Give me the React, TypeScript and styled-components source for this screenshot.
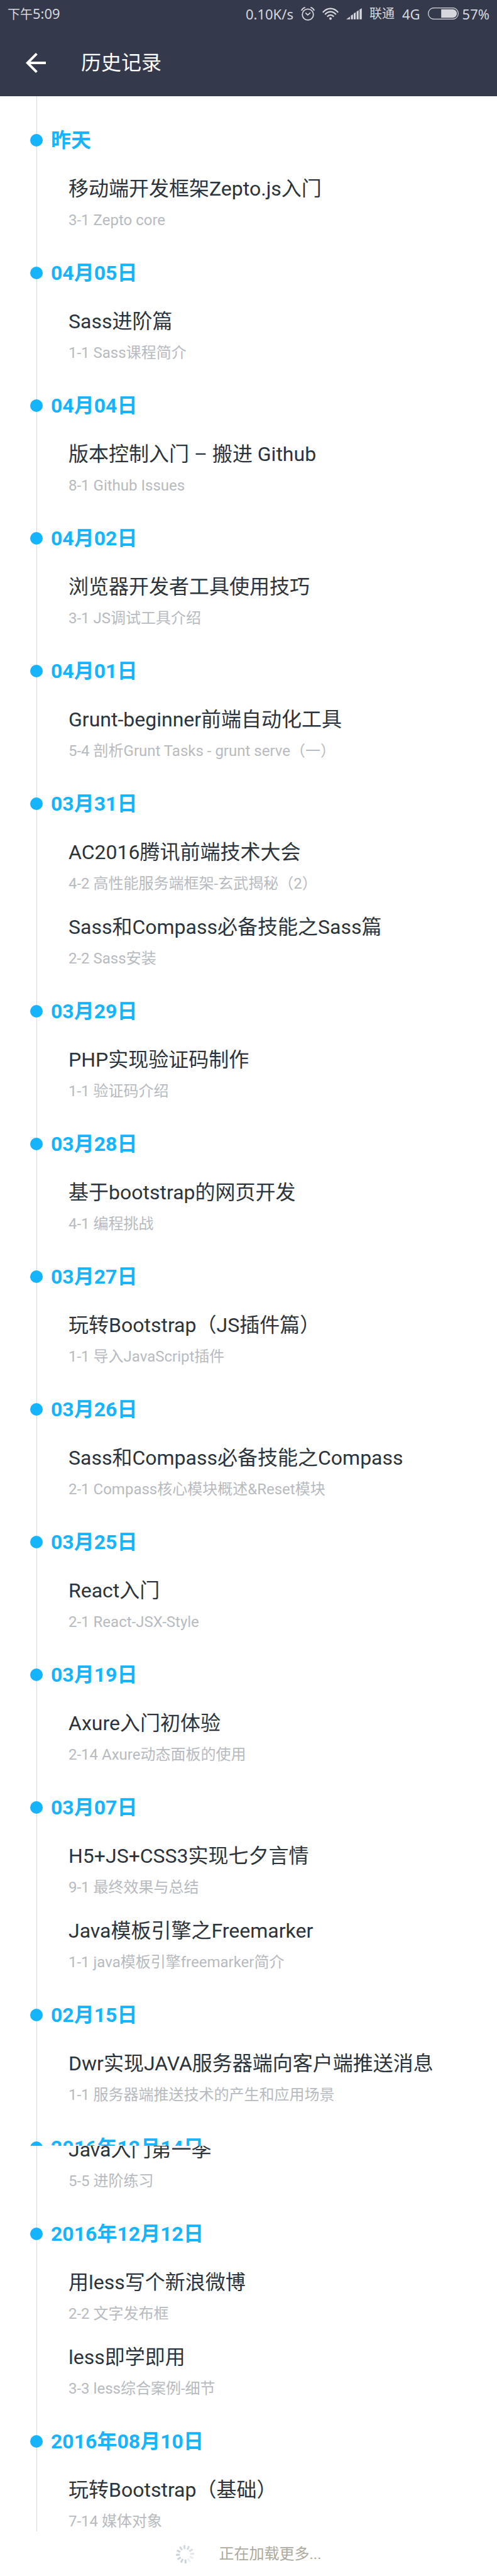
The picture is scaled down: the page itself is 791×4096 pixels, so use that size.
import React from 'react';
import styled, { createGlobalStyle } from 'styled-components';

const color = {
  header: '#35394c',
  status: '#d6d7dc',
  accent: '#14b4ff',
  title: '#2b343c',
  caption: '#b7bbc0',
  rule: '#d9dbde',
  loading: '#adaa9e',
};

const GlobalStyle = createGlobalStyle`
  * { box-sizing: border-box; }
  body {
    margin: 0;
    background: #fff;
    font-family: Roboto, "Noto Sans CJK SC", sans-serif;
  }
`;

const Header = styled.header`
  background: ${color.header};
`;

const StatusBar = styled.div`
  display: flex;
  align-items: center;
  justify-content: space-between;
  height: 47px;
  padding: 0 12px 4px;
  color: ${color.status};
  font-family: "Noto Sans", "Noto Sans CJK SC", sans-serif;
  font-size: 22px;
  line-height: 32px;
  white-space: nowrap;
`;

const Hanzi = styled.span`
  font-size: 20px;
`;

const StatusIcons = styled.div`
  display: flex;
  align-items: center;
  gap: 12px;
`;

const BatteryGroup = styled.span`
  display: flex;
  align-items: center;
  gap: 6px;
`;

const Icon = styled.svg`
  display: block;
  flex: none;
`;

const AppBar = styled.div`
  display: flex;
  align-items: center;
  gap: 48px;
  height: 106px;
  padding: 0 33px;
  color: #fff;
`;

const BackButton = styled.button`
  display: block;
  width: 48px;
  height: 48px;
  padding: 0;
  border: 0;
  background: none;
  color: inherit;
  cursor: pointer;
`;

const PageTitle = styled.h1`
  margin: 0;
  font-size: 32px;
  font-weight: 400;
  line-height: 44px;
`;

const Timeline = styled.main`
  margin-left: 58px;
  padding-top: 48px;
  border-left: 1px solid ${color.rule};
`;

const Day = styled.section`
  padding-bottom: 15px;

  &:last-child {
    padding-bottom: 0;
  }
`;

const DayHeading = styled.h2<{ $cut?: boolean }>`
  display: flex;
  align-items: flex-start;
  gap: 13px;
  height: ${(p) => (p.$cut ? '19px' : '44px')};
  margin: 0 0 ${(p) => (p.$cut ? '0' : '33px')} -11px;
  overflow: hidden;
  color: ${color.accent};
  font-size: 32px;
  font-weight: 700;
  line-height: 45px;
`;

const Dot = styled.span`
  flex: none;
  width: 20px;
  height: 20px;
  margin-top: 12px;
  border-radius: 50%;
  background: ${color.accent};
`;

const Lessons = styled.ul<{ $cut?: boolean }>`
  margin: 0;
  padding: 0;
  list-style: none;
  overflow: hidden;

  & > li:first-child {
    margin-top: ${(p) => (p.$cut ? '-16px' : '0')};
  }
`;

const Lesson = styled.li`
  padding: 0 24px 31px 50px;

  ${Day}:last-child &:last-child {
    padding-bottom: 0;
  }
`;

const LessonLink = styled.a`
  display: flex;
  flex-direction: column;
  gap: 12px;
  color: ${color.title};
  text-decoration: none;
`;

const Course = styled.span`
  font-size: 32px;
  line-height: 44px;
`;

const Chapter = styled.span`
  color: ${color.caption};
  font-size: 24px;
  line-height: 32px;
`;

const Loading = styled.footer`
  display: flex;
  align-items: center;
  justify-content: center;
  gap: 40px;
  padding: 20px 0 19px;
  color: ${color.loading};
  font-size: 24px;
  line-height: 32px;
`;

type DayRecord = {
  date: string;
  cut?: boolean;
  lessons: [course: string, chapter: string][];
};

const history: DayRecord[] = [
  { date: '昨天', lessons: [['移动端开发框架Zepto.js入门', '3-1 Zepto core']] },
  { date: '04月05日', lessons: [['Sass进阶篇', '1-1 Sass课程简介']] },
  { date: '04月04日', lessons: [['版本控制入门 – 搬进 Github', '8-1 Github Issues']] },
  { date: '04月02日', lessons: [['浏览器开发者工具使用技巧', '3-1 JS调试工具介绍']] },
  { date: '04月01日', lessons: [['Grunt-beginner前端自动化工具', '5-4 剖析Grunt Tasks - grunt serve（一）']] },
  {
    date: '03月31日',
    lessons: [
      ['AC2016腾讯前端技术大会', '4-2 高性能服务端框架-玄武揭秘（2）'],
      ['Sass和Compass必备技能之Sass篇', '2-2 Sass安装'],
    ],
  },
  { date: '03月29日', lessons: [['PHP实现验证码制作', '1-1 验证码介绍']] },
  { date: '03月28日', lessons: [['基于bootstrap的网页开发', '4-1 编程挑战']] },
  { date: '03月27日', lessons: [['玩转Bootstrap（JS插件篇）', '1-1 导入JavaScript插件']] },
  { date: '03月26日', lessons: [['Sass和Compass必备技能之Compass', '2-1 Compass核心模块概述&Reset模块']] },
  { date: '03月25日', lessons: [['React入门', '2-1 React-JSX-Style']] },
  { date: '03月19日', lessons: [['Axure入门初体验', '2-14 Axure动态面板的使用']] },
  {
    date: '03月07日',
    lessons: [
      ['H5+JS+CSS3实现七夕言情', '9-1 最终效果与总结'],
      ['Java模板引擎之Freemarker', '1-1 java模板引擎freemarker简介'],
    ],
  },
  { date: '02月15日', lessons: [['Dwr实现JAVA服务器端向客户端推送消息', '1-1 服务器端推送技术的产生和应用场景']] },
  { date: '2016年12月14日', cut: true, lessons: [['Java入门第一季', '5-5 进阶练习']] },
  {
    date: '2016年12月12日',
    lessons: [
      ['用less写个新浪微博', '2-2 文字发布框'],
      ['less即学即用', '3-3 less综合案例-细节'],
    ],
  },
  { date: '2016年08月10日', lessons: [['玩转Bootstrap（基础）', '7-14 媒体对象']] },
];

const AlarmIcon = () => (
  <Icon width="22" height="22" viewBox="0 0 86 87" fill="none" stroke="currentColor" aria-hidden="true">
    <circle cx="43" cy="48" r="35" strokeWidth="7" />
    <path d="M28 37l14 14 17-15" strokeWidth="7" />
    <path d="M3 23C7 13 15 6 26 3M83 23C79 13 71 6 60 3" strokeWidth="7" />
  </Icon>
);

const WifiIcon = () => (
  <Icon width="26" height="20" viewBox="0 0 104 78" fill="none" stroke="currentColor" aria-hidden="true">
    <path d="M3 30C31-3 73-3 101 30" strokeWidth="9" />
    <path d="M17 43C37 20 67 20 87 43" strokeWidth="9" />
    <path d="M31 57C43 43 61 43 73 57" strokeWidth="9" />
    <circle cx="52" cy="69" r="8" fill="currentColor" stroke="none" />
  </Icon>
);

const SignalIcon = () => (
  <Icon width="25" height="18" viewBox="0 0 100 72" fill="currentColor" aria-hidden="true">
    <path d="M0 71L24 54V71zM30 71V47L43 39V71zM48 71V34L60 26V71zM66 71V22L79 13V71zM85 71V9L99 0V71z" />
  </Icon>
);

const BatteryIcon = () => (
  <Icon width="49" height="19" viewBox="0 0 192 75" aria-hidden="true">
    <rect x="2" y="2" width="188" height="71" rx="35" fill="none" stroke="currentColor" strokeWidth="5" />
    <path d="M83 11H155a26 26 0 0 1 0 53H83z" fill="currentColor" />
  </Icon>
);

const ArrowBackIcon = () => (
  <Icon width="48" height="48" viewBox="0 0 24 24" fill="currentColor" aria-hidden="true">
    <path d="M20 11H7.83l5.59-5.59L12 4l-8 8 8 8 1.41-1.41L7.83 13H20v-2z" />
  </Icon>
);

// Clockwise from the bottom spoke, darkest to lightest.
const SPOKE_OPACITY = [0.95, 0.93, 0.91, 0.89, 0.87, 0.85, 0.83, 0.8, 0.68, 0.56, 0.4, 0.32];

const Spinner = () => (
  <Icon width="29" height="29" viewBox="-59 -59 118 118" aria-hidden="true">
    {SPOKE_OPACITY.map((opacity, i) => (
      <rect
        key={i}
        x="-6"
        y="-59"
        width="12"
        height="25"
        fill="#c6d0d6"
        opacity={opacity}
        transform={`rotate(${176 + i * 30})`}
      />
    ))}
  </Icon>
);

export default function App() {
  return (
    <>
      <GlobalStyle />
      <Header>
        <StatusBar>
          <span>
            <Hanzi>下午</Hanzi>5:09
          </span>
          <StatusIcons>
            <span>0.10K/s</span>
            <AlarmIcon />
            <WifiIcon />
            <SignalIcon />
            <Hanzi>联通</Hanzi>
            <span>4G</span>
            <BatteryGroup>
              <BatteryIcon />
              <span>57%</span>
            </BatteryGroup>
          </StatusIcons>
        </StatusBar>
        <AppBar>
          <BackButton type="button" aria-label="返回">
            <ArrowBackIcon />
          </BackButton>
          <PageTitle>历史记录</PageTitle>
        </AppBar>
      </Header>
      <Timeline>
        {history.map((day) => (
          <Day key={day.date}>
            <DayHeading $cut={day.cut}>
              <Dot />
              {day.date}
            </DayHeading>
            <Lessons $cut={day.cut}>
              {day.lessons.map(([course, chapter]) => (
                <Lesson key={course}>
                  <LessonLink href="#">
                    <Course>{course}</Course>
                    <Chapter>{chapter}</Chapter>
                  </LessonLink>
                </Lesson>
              ))}
            </Lessons>
          </Day>
        ))}
      </Timeline>
      <Loading role="status">
        <Spinner />
        正在加载更多...
      </Loading>
    </>
  );
}
